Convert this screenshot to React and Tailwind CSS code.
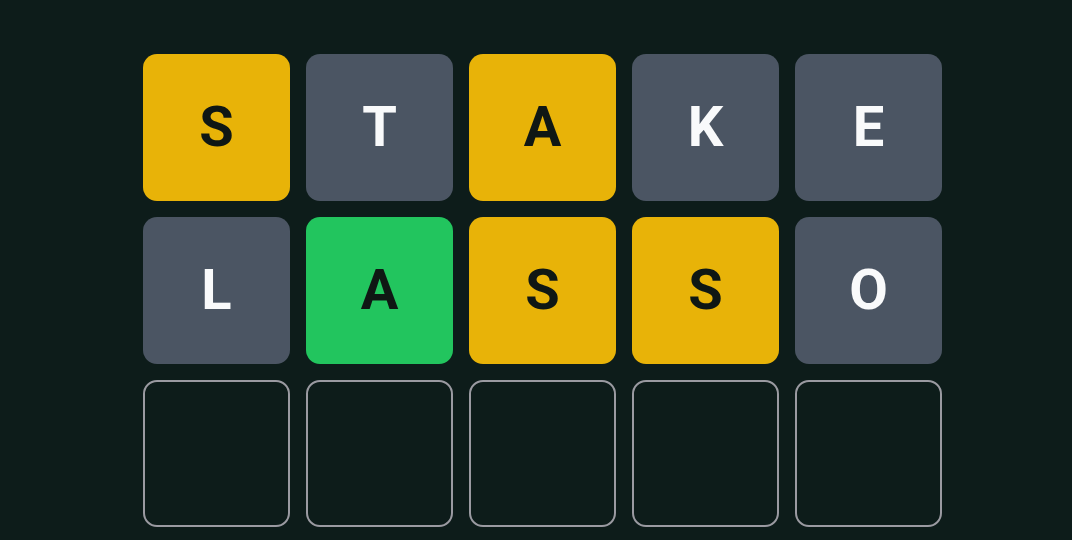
import React from "react";

const rows = [
  [["S", "y"], ["T", "g"], ["A", "y"], ["K", "g"], ["E", "g"]],
  [["L", "g"], ["A", "G"], ["S", "y"], ["S", "y"], ["O", "g"]],
  [["", "e"], ["", "e"], ["", "e"], ["", "e"], ["", "e"]],
];

function Tile({ ch, kind }) {
  const base =
    "w-[147px] h-[147px] rounded-[14px] flex items-center justify-center text-[56px] font-bold leading-none pb-[2px]";
  if (kind === "y") return <div className={`${base} bg-[#e8b308] text-[#0f1714]`}>{ch}</div>;
  if (kind === "G") return <div className={`${base} bg-[#22c55e] text-[#0f1714]`}>{ch}</div>;
  if (kind === "g") return <div className={`${base} bg-[#4b5563] text-[#f9fafb]`}>{ch}</div>;
  return <div className={`${base} border-2 border-[#9a9aa1]`}></div>;
}

export default function App() {
  return (
    <div
      className="w-[1072px] h-[540px] bg-[#0d1c1a] overflow-hidden pt-[54px] pl-[143px]"
      style={{ fontFamily: "Roboto, 'Noto Sans', sans-serif" }}
    >
      <div className="grid grid-cols-[repeat(5,147px)] gap-4">
        {rows.flat().map(([ch, kind], i) => (
          <Tile key={i} ch={ch} kind={kind} />
        ))}
      </div>
    </div>
  );
}
